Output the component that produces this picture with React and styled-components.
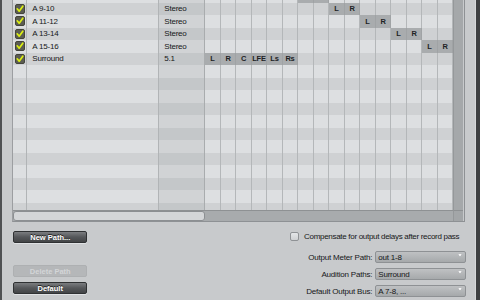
import React from "react";
import styled, { createGlobalStyle, css } from "styled-components";

const GlobalStyle = createGlobalStyle`
  html, body {
    margin: 0;
    padding: 0;
    background: #c8cacc;
  }
  body {
    font-family: "Liberation Sans", Arial, sans-serif;
    font-size: 8px;
    letter-spacing: -0.2px;
    color: #161718;
  }
`;

const Window = styled.div`
  display: flex;
  width: 480px;
  height: 300px;
  overflow: hidden;
`;

const LeftEdge = styled.div`
  width: 3px;
  background: #4f5153;
`;

const RightEdge = styled.div`
  width: 5px;
  background: #3e4042;
  border-left: 1px solid #d6d8da;
`;

const Panel = styled.div`
  flex: 1;
  display: flex;
  flex-direction: column;
  padding: 0 10px;
  background: #c8cacc;
`;

const Frame = styled.div`
  display: grid;
  grid-template-columns: 440px 10px;
  grid-template-rows: 210px 11px;
  width: 451px;
  border-left: 1px solid #9c9ea1;
  border-right: 1px solid #8e9194;
  border-bottom: 1px solid #8e9194;
`;

const GridArea = styled.div`
  overflow: hidden;
`;

const Rows = styled.div`
  margin-top: -10px;
`;

const Row = styled.div`
  display: grid;
  grid-template-columns: 14px 132px 46px repeat(16, 15.5px);
  height: 12.5px;
  background: ${(p) => (p.$odd ? "#cfd1d3" : "#dddfe1")};
`;

const Cell = styled.div`
  display: flex;
  align-items: center;
  box-sizing: border-box;
  border-right: 1px solid #b1b4b6;
  white-space: nowrap;
  overflow: hidden;
`;

const CheckCell = styled(Cell)`
  justify-content: center;
  padding-left: 1px;
`;

const NameCell = styled(Cell)`
  padding-left: 5px;
`;

const FormatCell = styled(Cell)`
  padding-left: 5px;
  background: rgba(90, 95, 100, 0.09);
  border-right-color: #a9acae;
`;

const ChanCell = styled(Cell)`
  justify-content: center;
  font-weight: bold;
  font-size: 7.5px;
  color: #202224;
  border-right-color: #b4b7b9;
  ${(p) =>
    p.$on &&
    css`
      background: #a9acae;
      border-right-color: #a0a3a5;
    `}
`;

const VScroll = styled.div`
  grid-row: 1;
  grid-column: 2;
  background: #a5a8aa;
  border-left: 1px solid #95989a;
`;

const HScroll = styled.div`
  display: flex;
  border-top: 1px solid #8e9193;
  background: #a8abad;
`;

const Thumb = styled.div`
  width: 192px;
  box-sizing: border-box;
  background: #d4d6d8;
  border: 1px solid #8c8f92;
  border-radius: 3px;
`;

const Corner = styled.div`
  background: #a3a6a8;
  border-top: 1px solid #8e9193;
  border-left: 1px solid #95989a;
`;

const Bottom = styled.div`
  display: flex;
  justify-content: space-between;
  padding-top: 9px;
`;

const LeftCol = styled.div`
  display: flex;
  flex-direction: column;
  padding-left: 1px;
`;

const Button = styled.div`
  width: 74px;
  height: 12px;
  box-sizing: border-box;
  display: flex;
  align-items: center;
  justify-content: center;
  border-radius: 2px;
  font-weight: bold;
  font-size: 7.5px;
  letter-spacing: 0;
  margin-top: ${(p) => p.$gap || 0}px;
  color: #ffffff;
  text-shadow: 0 -1px 0 #222;
  background: linear-gradient(#7b7d80, #55575a 50%, #434547);
  border: 1px solid #2f3133;
  box-shadow: 0 1px 0 #dfe1e3;
  ${(p) =>
    p.$disabled &&
    css`
      color: #d3d5d7;
      text-shadow: none;
      background: #b5b7b9;
      border-color: #aeb0b2;
      box-shadow: none;
    `}
`;

const RightCol = styled.div`
  display: flex;
  flex-direction: column;
  align-items: flex-end;
`;

const CheckRow = styled.label`
  display: flex;
  align-items: center;
  gap: 5px;
  height: 10px;
  margin-right: 6px;
  margin-bottom: 10px;
  letter-spacing: -0.3px;
`;

const EmptyBox = styled.span`
  width: 9px;
  height: 9px;
  box-sizing: border-box;
  border: 1px solid #8f9295;
  border-radius: 2px;
  background: linear-gradient(#e4e6e8, #cfd1d3);
`;

const FieldRow = styled.div`
  display: flex;
  align-items: center;
  gap: 3px;
  height: 12px;
  margin-bottom: 5px;
  margin-right: -1px;
`;

const Select = styled.div`
  position: relative;
  width: 91px;
  height: 11.5px;
  box-sizing: border-box;
  display: flex;
  align-items: center;
  padding-left: 2px;
  border: 1px solid #8e9194;
  border-radius: 2px;
  background: linear-gradient(#bfc1c3, #a6a9ab);
`;

const Arrow = styled.span`
  position: absolute;
  right: 3px;
  top: 2px;
  width: 0;
  height: 0;
  border-left: 2.5px solid transparent;
  border-right: 2.5px solid transparent;
  border-top: 3px solid #f4f5f6;
  filter: drop-shadow(0 0.5px 0 #5a5c5e);
`;

function CheckMark() {
  return (
    <svg width="10" height="10" viewBox="0 0 10 10">
      <rect x="0.5" y="0.5" width="9" height="9" rx="1.5" fill="#5c5d52" stroke="#44453d" />
      <path d="M2.2 4.8 L4.2 7.2 L7.8 2.2" fill="none" stroke="#dcf012" strokeWidth="1.7" strokeLinecap="round" strokeLinejoin="round" />
    </svg>
  );
}

// first row is scrolled almost out of view: only its channel block shows
const paths = [
  { start: 6, labels: ["", ""], hidden: true },
  { name: "A 9-10", format: "Stereo", start: 8, labels: ["L", "R"] },
  { name: "A 11-12", format: "Stereo", start: 10, labels: ["L", "R"] },
  { name: "A 13-14", format: "Stereo", start: 12, labels: ["L", "R"] },
  { name: "A 15-16", format: "Stereo", start: 14, labels: ["L", "R"] },
  { name: "Surround", format: "5.1", start: 0, labels: ["L", "R", "C", "LFE", "Ls", "Rs"] },
];

const TOTAL_ROWS = 18;
const CHANNELS = 16;

function PathRow({ path, index }) {
  const chans = [];
  for (let c = 0; c < CHANNELS; c++) {
    const label = path ? path.labels[c - path.start] : undefined;
    chans.push(
      <ChanCell key={c} $on={label !== undefined}>
        {label}
      </ChanCell>
    );
  }
  const shown = path && !path.hidden;
  return (
    <Row $odd={index % 2 === 1}>
      <CheckCell>{shown && <CheckMark />}</CheckCell>
      <NameCell>{shown && path.name}</NameCell>
      <FormatCell>{shown && path.format}</FormatCell>
      {chans}
    </Row>
  );
}

export default function App() {
  const rows = Array.from({ length: TOTAL_ROWS }, (_, i) => paths[i]);

  return (
    <Window>
      <GlobalStyle />
      <LeftEdge />
      <Panel>
        <Frame>
          <GridArea>
            <Rows>
              {rows.map((p, i) => (
                <PathRow key={i} path={p} index={i} />
              ))}
            </Rows>
          </GridArea>
          <VScroll />
          <HScroll>
            <Thumb />
          </HScroll>
          <Corner />
        </Frame>
        <Bottom>
          <LeftCol>
            <Button>New Path...</Button>
            <Button $disabled $gap={22}>Delete Path</Button>
            <Button $gap={5}>Default</Button>
          </LeftCol>
          <RightCol>
            <CheckRow>
              <EmptyBox />
              <span>Compensate for output delays after record pass</span>
            </CheckRow>
            <FieldRow>
              <span>Output Meter Path:</span>
              <Select>
                out 1-8
                <Arrow />
              </Select>
            </FieldRow>
            <FieldRow>
              <span>Audition Paths:</span>
              <Select>
                Surround
                <Arrow />
              </Select>
            </FieldRow>
            <FieldRow>
              <span>Default Output Bus:</span>
              <Select>
                A 7-8, ...
                <Arrow />
              </Select>
            </FieldRow>
          </RightCol>
        </Bottom>
      </Panel>
      <RightEdge />
    </Window>
  );
}
